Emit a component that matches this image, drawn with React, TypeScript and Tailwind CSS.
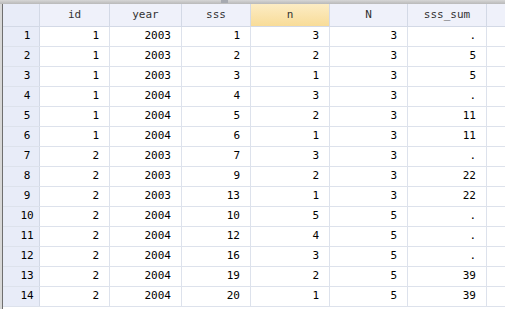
import React from "react";

type Row = [number, number, number, number, number, number, string];

const rows: Row[] = [
  [1, 1, 2003, 1, 3, 3, "."],
  [2, 1, 2003, 2, 2, 3, "5"],
  [3, 1, 2003, 3, 1, 3, "5"],
  [4, 1, 2004, 4, 3, 3, "."],
  [5, 1, 2004, 5, 2, 3, "11"],
  [6, 1, 2004, 6, 1, 3, "11"],
  [7, 2, 2003, 7, 3, 3, "."],
  [8, 2, 2003, 9, 2, 3, "22"],
  [9, 2, 2003, 13, 1, 3, "22"],
  [10, 2, 2004, 10, 5, 5, "."],
  [11, 2, 2004, 12, 4, 5, "."],
  [12, 2, 2004, 16, 3, 5, "."],
  [13, 2, 2004, 19, 2, 5, "39"],
  [14, 2, 2004, 20, 1, 5, "39"],
];

const columns = [
  { name: "id", width: "w-[70px]" },
  { name: "year", width: "w-[72px]" },
  { name: "sss", width: "w-[69px]" },
  { name: "n", width: "w-[79px]" },
  { name: "N", width: "w-[78px]" },
  { name: "sss_sum", width: "w-[79px]" },
];

export default function App() {
  return (
    <div
      className="flex h-[309px] w-[505px] flex-col overflow-hidden bg-white text-[11px] text-black"
      style={{ fontFamily: '"DejaVu Sans Mono", "Liberation Mono", monospace' }}
    >
      {/* top splitter bar */}
      <div className="flex h-[4px] shrink-0 bg-gradient-to-b from-[#d6d6d6] to-[#b9b9b9]">
        <div className="ml-[221px] h-[3px] w-[7px] bg-[#a7aab0]" />
      </div>

      <div className="flex flex-1">
        <div className="w-[2px] bg-[#d8d8d8]" />
        <div className="w-[1px] bg-[#6f6f6f]" />

        <div className="flex flex-1 flex-col">
          {/* header */}
          <div className="flex h-[23px] shrink-0 border-b border-[#d3d9e6] bg-[#eff1fa] text-[#333]">
            <div className="w-[37px] border-r border-[#d3d9e6] bg-[#e8ecf8]" />
            {columns.map((col) => (
              <div
                key={col.name}
                className={`${col.width} flex items-center justify-center border-r border-[#d3d9e6] ${
                  col.name === "n" ? "bg-gradient-to-b from-[#fcecc4] to-[#f8dc98]" : ""
                }`}
              >
                {col.name}
              </div>
            ))}
            <div className="flex-1" />
          </div>

          {/* data rows */}
          {rows.map((row) => (
            <div key={row[0]} className="flex h-[20px] shrink-0 border-b border-[#dde2ec]">
              <div className="flex w-[37px] items-center justify-center border-r border-[#d3d9e6] bg-[#e8ecf8] pl-[12px]">
                {row[0]}
              </div>
              {row.slice(1).map((val, i) => (
                <div
                  key={i}
                  className={`${columns[i].width} flex items-center justify-end border-r border-[#dde2ec] pr-[10px]`}
                >
                  {val}
                </div>
              ))}
              <div className="flex-1" />
            </div>
          ))}
        </div>
      </div>
    </div>
  );
}
